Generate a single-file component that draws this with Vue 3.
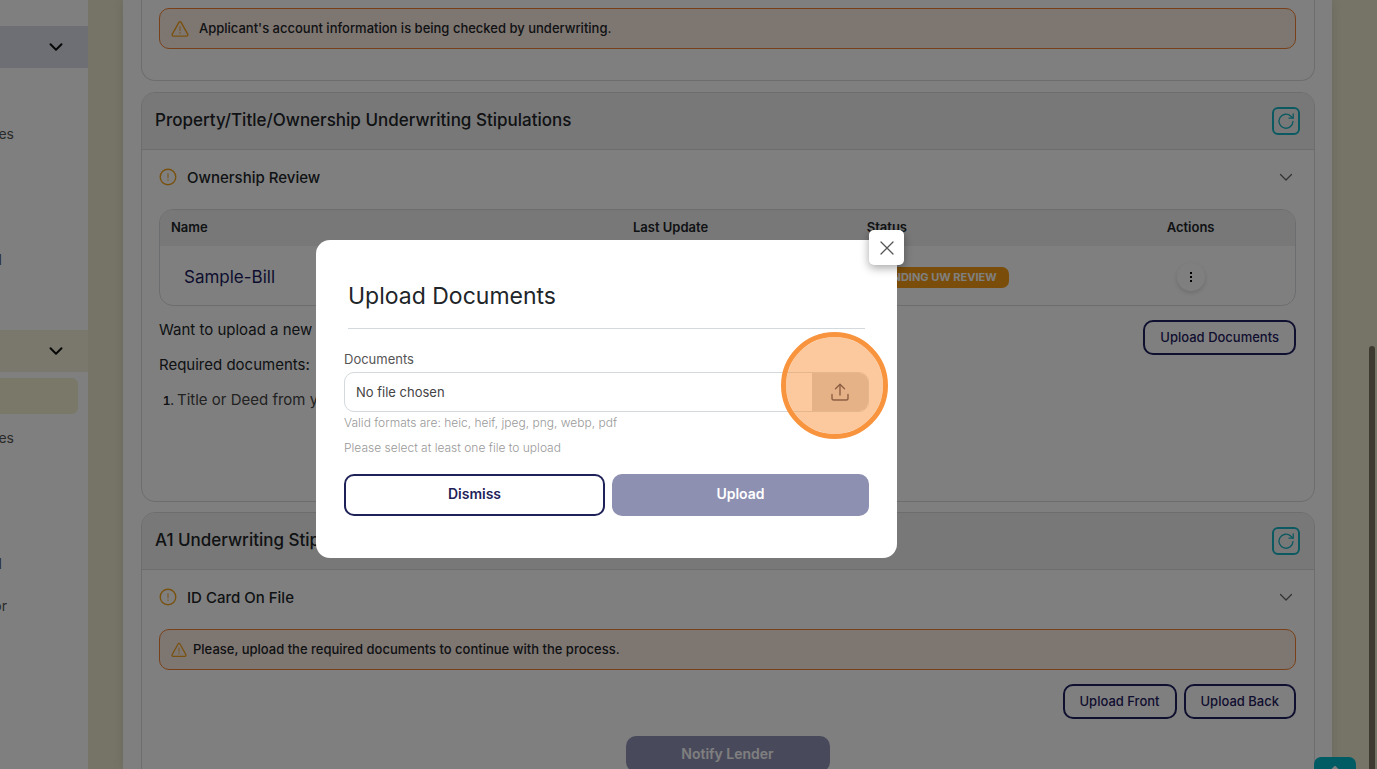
<script setup>
import { ref } from 'vue'

const upperItems = ref([
  { id: 1, label: '', end: '' },
  { id: 2, label: 'es', end: 'far' },
  { id: 3, label: '', end: '' },
  { id: 4, label: '', end: '' },
  { id: 5, label: 'l', end: 'edge' },
  { id: 6, label: '', end: '' }
])

const lowerItems = ref([
  { id: 7, label: '', end: '', active: true },
  { id: 8, label: 'es', end: 'far' },
  { id: 9, label: '', end: '' },
  { id: 10, label: '', end: '' },
  { id: 11, label: 'l', end: 'edge' },
  { id: 12, label: 'or', end: 'near' }
])

const documents = ref([
  { id: 1, name: 'Sample-Bill', lastUpdate: '', status: 'PENDING UW REVIEW' }
])

const fileName = ref('')
const modalOpen = ref(true)

function onFileChange(event) {
  fileName.value = event.target.files[0]?.name || ''
}
</script>

<template>
  <div class="page">
    <!-- Sidebar -->
    <nav class="sidebar">
      <button type="button" class="group group-blue" aria-label="Toggle group">
        <svg class="group-icon" viewBox="0 0 14 14"><path d="M1.500 4.200 7 9.800l5.500-5.600" /></svg>
      </button>
      <a v-for="item in upperItems" :key="item.id" href="#" class="nav-item" :class="item.end">{{ item.label }}</a>
      <button type="button" class="group group-cream" aria-label="Toggle group">
        <svg class="group-icon" viewBox="0 0 14 14"><path d="M1.500 4.200 7 9.800l5.500-5.600" /></svg>
      </button>
      <a
        v-for="item in lowerItems"
        :key="item.id"
        href="#"
        class="nav-item"
        :class="[item.end, { active: item.active }]"
      >{{ item.label }}</a>
    </nav>

    <!-- Main content -->
    <main class="content">
      <section class="card card-first">
        <div class="alert">
          <svg class="alert-icon large" viewBox="0 0 18 18">
            <path d="M7.900 2.300 1.300 14.200c-.5.9.1 1.900 1.100 1.900h13.200c1 0 1.600-1 1.100-1.900L10.100 2.300c-.5-.9-1.700-.9-2.200 0z" />
            <path class="mark" d="M9 6.800v3.700M9 12.600v.6" />
          </svg>
          <span>Applicant's account information is being checked by underwriting.</span>
        </div>
      </section>

      <section class="card">
        <header class="card-header">
          <h2>Property/Title/Ownership Underwriting Stipulations</h2>
          <button type="button" class="refresh" aria-label="Refresh">
            <svg viewBox="0 0 18 18"><path d="M16 9.500A7 7 0 1 1 13.900 4.200L16 6" /><path d="M16.200 2v4.200H12" /></svg>
          </button>
        </header>
        <div class="card-body tall">
          <div class="section-title">
            <svg class="warn" viewBox="0 0 18 18"><circle cx="9" cy="9" r="7.800" /><path class="mark" d="M9 5.700v4M9 11.900v.5" /></svg>
            <h3>Ownership Review</h3>
            <svg class="chevron" viewBox="0 0 14 14"><path d="M1.500 4.500 7 10l5.500-5.500" /></svg>
          </div>

          <div class="table-wrap">
            <table>
              <thead>
                <tr>
                  <th class="col-name">Name</th>
                  <th class="col-update">Last Update</th>
                  <th class="col-status">Status</th>
                  <th class="col-actions">Actions</th>
                </tr>
              </thead>
              <tbody>
                <tr v-for="doc in documents" :key="doc.id">
                  <td class="doc-name"><a href="#">{{ doc.name }}</a></td>
                  <td>{{ doc.lastUpdate }}</td>
                  <td><span class="badge">{{ doc.status }}</span></td>
                  <td class="doc-actions">
                    <button type="button" class="more" aria-label="More actions">
                      <svg viewBox="0 0 12 12"><rect x="5" y="1" width="2" height="2" /><rect x="5" y="5" width="2" height="2" /><rect x="5" y="9" width="2" height="2" /></svg>
                    </button>
                  </td>
                </tr>
              </tbody>
            </table>
          </div>

          <div class="upload-row">
            <div class="instructions">
              <p>Want to upload a new one?</p>
              <p>Required documents:</p>
              <ol>
                <li>Title or Deed from your</li>
              </ol>
            </div>
            <button type="button" class="btn-outline">Upload Documents</button>
          </div>
        </div>
      </section>

      <section class="card">
        <header class="card-header">
          <h2>A1 Underwriting Stipulations</h2>
          <button type="button" class="refresh" aria-label="Refresh">
            <svg viewBox="0 0 18 18"><path d="M16 9.500A7 7 0 1 1 13.900 4.200L16 6" /><path d="M16.200 2v4.200H12" /></svg>
          </button>
        </header>
        <div class="card-body">
          <div class="section-title">
            <svg class="warn" viewBox="0 0 18 18"><circle cx="9" cy="9" r="7.800" /><path class="mark" d="M9 5.700v4M9 11.900v.5" /></svg>
            <h3>ID Card On File</h3>
            <svg class="chevron" viewBox="0 0 14 14"><path d="M1.500 4.500 7 10l5.500-5.500" /></svg>
          </div>
          <div class="alert">
            <svg class="alert-icon" viewBox="0 0 18 18">
              <path d="M7.900 2.300 1.300 14.200c-.5.9.1 1.900 1.100 1.900h13.200c1 0 1.600-1 1.100-1.900L10.100 2.300c-.5-.9-1.700-.9-2.200 0z" />
              <path class="mark" d="M9 6.800v3.700M9 12.600v.6" />
            </svg>
            <span>Please, upload the required documents to continue with the process.</span>
          </div>
          <div class="button-row">
            <button type="button" class="btn-outline">Upload Front</button>
            <button type="button" class="btn-outline">Upload Back</button>
          </div>
          <button type="button" class="notify">Notify Lender</button>
        </div>
      </section>
    </main>

    <div class="scroll-thumb"></div>
    <button type="button" class="to-top" aria-label="Back to top">
      <svg viewBox="0 0 18 18"><path d="M9 16V2M3 8l6-6 6 6" /></svg>
    </button>
  </div>

  <!-- Upload modal -->
  <div v-if="modalOpen" class="overlay">
    <form class="modal" @submit.prevent>
      <button type="button" class="close" aria-label="Close" @click="modalOpen = false">
        <svg viewBox="0 0 14 14"><path d="M1 1l12 12M13 1 1 13" /></svg>
      </button>
      <h1>Upload Documents</h1>
      <label class="field-label" for="documents">Documents</label>
      <div class="file-field">
        <span class="file-name">{{ fileName || 'No file chosen' }}</span>
        <span class="file-button">
          <svg viewBox="0 0 18 18"><path d="M9 12V1.500M4.500 5.800 9 1.300l4.500 4.500M1 11.500v3.700c0 1 .8 1.800 1.800 1.800h12.400c1 0 1.800-.8 1.800-1.800v-3.700" /></svg>
        </span>
        <input id="documents" type="file" class="file-input" @change="onFileChange">
        <span class="highlight"></span>
      </div>
      <p class="hint">Valid formats are: heic, heif, jpeg, png, webp, pdf</p>
      <p class="hint hint-last">Please select at least one file to upload</p>
      <div class="modal-actions">
        <button type="button" class="dismiss" @click="modalOpen = false">Dismiss</button>
        <button type="submit" class="upload" :disabled="!fileName">Upload</button>
      </div>
    </form>
  </div>
</template>

<style>
body {
  margin: 0;
  font-family: Inter, "Open Sans", sans-serif;
  color: #212529;
}
</style>

<style scoped>
* {
  box-sizing: border-box;
}

h1, h2, h3, p, ol {
  margin: 0;
  padding: 0;
}

button {
  font-family: inherit;
  padding: 0;
  border: none;
}

a {
  text-decoration: none;
}

svg {
  display: block;
  fill: none;
  stroke: currentColor;
  stroke-linecap: round;
  stroke-linejoin: round;
}

.page {
  display: flex;
  height: 100vh;
  overflow: hidden;
  background: #ece8cd;
}

/* Sidebar */
.sidebar {
  display: flex;
  flex-direction: column;
  flex: 0 0 88px;
  padding-top: 26px;
  background: #fff;
  overflow: hidden;
}

.group {
  display: flex;
  flex-shrink: 0;
  align-items: center;
  justify-content: flex-end;
  height: 42px;
  padding-right: 25px;
  margin-bottom: 3px;
  color: #111;
}

.group-blue {
  background: #dbdee9;
}

.group-cream {
  margin-top: 7px;
  background: #f5f1d8;
}

.group-icon {
  width: 14px;
  height: 14px;
  stroke-width: 2;
}

.nav-item {
  display: flex;
  flex-shrink: 0;
  align-items: center;
  justify-content: flex-end;
  height: 42px;
  padding-bottom: 2px;
  font-size: 14px;
  color: #555;
}

.nav-item.far {
  padding-right: 74px;
}

.nav-item.near {
  padding-right: 81px;
}

.nav-item.edge {
  padding-right: 86px;
}

.nav-item.active {
  height: 36px;
  margin: 3px 10px 3px 0;
  border-radius: 0 6px 6px 0;
  background: #f5f1d0;
}

/* Cards */
.content {
  flex: 1;
  min-width: 0;
  margin: 0 45px 0 35px;
  padding: 0 17px 0 18px;
  background: #fff;
  box-shadow: 0 0 10px rgba(0, 0, 0, 0.1);
}

.card {
  margin-bottom: 10px;
  border: 1px solid #d8dade;
  border-radius: 14px;
  overflow: hidden;
}

.card-first {
  margin-bottom: 11px;
  padding: 8px 18px 31px 17px;
  border-top: none;
  border-radius: 0 0 14px 14px;
}

.card-header {
  display: flex;
  align-items: center;
  justify-content: space-between;
  height: 57px;
  padding: 0 14px 0 13px;
  background: #f0f0f0;
  border-bottom: 1px solid #d8dade;
}

.card-header h2 {
  padding-bottom: 3px;
  font-size: 17px;
  font-weight: 500;
}

.refresh {
  display: flex;
  align-items: center;
  justify-content: center;
  width: 28px;
  height: 28px;
  border: 2px solid #17b3c3;
  border-radius: 6px;
  background: transparent;
  color: #17b3c3;
}

.refresh svg {
  width: 18px;
  height: 18px;
  stroke-width: 1.3;
}

.card-body {
  padding: 0 18px 0 17px;
}

.card-body.tall {
  padding-bottom: 91px;
}

.section-title {
  display: flex;
  align-items: center;
  height: 54px;
  margin-bottom: 5px;
}

.section-title h3 {
  flex: 1;
  margin-left: 10px;
  font-size: 15px;
  font-weight: 500;
}

.warn {
  width: 18px;
  height: 18px;
  stroke: #f2a31f;
  stroke-width: 1.4;
}

.mark {
  opacity: 0.7;
}

.chevron {
  width: 14px;
  height: 14px;
  margin-right: 3px;
  stroke: #666;
  stroke-width: 1.3;
}

.alert {
  display: flex;
  align-items: center;
  gap: 6px;
  height: 41px;
  padding: 0 11px;
  border: 1px solid #f08030;
  border-radius: 10px;
  background: #fdece2;
  font-size: 13px;
  font-weight: 500;
}

.alert span {
  padding-bottom: 1px;
}

.alert-icon {
  width: 16px;
  height: 16px;
  stroke: #f2a31f;
  stroke-width: 1.4;
}

.alert-icon.large {
  width: 18px;
  height: 18px;
  margin-right: 4px;
}

.table-wrap {
  border: 1px solid #d8dade;
  border-radius: 14px;
  overflow: hidden;
}

table {
  width: 100%;
  table-layout: fixed;
  border-collapse: collapse;
}

th {
  height: 36px;
  padding: 0 11px 2px;
  background: #f0f0f0;
  text-align: left;
  font-size: 13px;
  font-weight: 600;
}

.col-name {
  width: 40.7%;
}

.col-update {
  width: 20.6%;
}

.col-status {
  width: 20.3%;
}

.col-actions {
  text-align: center;
}

td {
  height: 59px;
  padding: 2px 11px 0;
}

.doc-name {
  padding-left: 24px;
}

.doc-name a {
  font-size: 17px;
  color: #1b1b5e;
}

.badge {
  display: inline-block;
  padding: 0 12px;
  border-radius: 7px;
  background: #f59a14;
  color: #fff;
  font-size: 11px;
  font-weight: 700;
  line-height: 21px;
}

.more {
  display: flex;
  align-items: center;
  justify-content: center;
  width: 28px;
  height: 28px;
  margin: 0 auto;
  border-radius: 50%;
  background: #fff;
  box-shadow: 0 2px 5px rgba(0, 0, 0, 0.15);
}

.more svg {
  width: 12px;
  height: 12px;
  fill: #000;
  stroke: none;
}

.upload-row {
  display: flex;
  align-items: flex-start;
  justify-content: space-between;
  margin-top: 14px;
}

.instructions {
  display: flex;
  flex-direction: column;
  gap: 15px;
  font-size: 15px;
  line-height: 20px;
}

.instructions ol {
  padding-left: 18px;
  color: #444;
}

.instructions li::marker {
  font-size: 12px;
  font-weight: 600;
  color: #212529;
}

.btn-outline {
  height: 35px;
  padding: 0 15px 1px;
  border: 2px solid #1f2060;
  border-radius: 10px;
  background: #fff;
  color: #1f2060;
  font-size: 13px;
  font-weight: 500;
}

.button-row {
  display: flex;
  justify-content: flex-end;
  gap: 7px;
  margin-top: 14px;
}

.notify {
  display: block;
  width: 204px;
  height: 36px;
  margin: 17px auto 20px;
  padding-bottom: 2px;
  border-radius: 10px;
  background: #9193b6;
  color: #fff;
  font-size: 14px;
  font-weight: 600;
}

.scroll-thumb {
  position: fixed;
  right: 2px;
  top: 45%;
  bottom: 0;
  width: 6px;
  border-radius: 3px 3px 0 0;
  background: #7e7563;
}

.to-top {
  position: fixed;
  right: 21px;
  bottom: -30px;
  display: flex;
  justify-content: center;
  width: 42px;
  height: 42px;
  padding-top: 8px;
  border-radius: 7px;
  background: #00b8c8;
  color: #fff;
}

.to-top svg {
  width: 18px;
  height: 18px;
  stroke-width: 2;
}

/* Modal */
.overlay {
  position: fixed;
  inset: 0;
  display: flex;
  align-items: center;
  justify-content: center;
  padding: 29px 164px 0 0;
  background: rgba(0, 0, 0, 0.5);
}

.modal {
  position: relative;
  width: 581px;
  padding: 28px 28px 42px;
  border-radius: 14px;
  background: #fff;
}

.modal h1 {
  margin: 0 4px 22px;
  padding-bottom: 4px;
  border-bottom: 1px solid #d3d9dc;
  font-size: 23px;
  font-weight: 400;
  line-height: 56px;
}

.close {
  position: absolute;
  top: -10px;
  right: -7px;
  display: flex;
  align-items: center;
  justify-content: center;
  width: 35px;
  height: 35px;
  border-radius: 5px;
  background: #fff;
  color: #555;
  box-shadow: 0 3px 10px rgba(0, 0, 0, 0.35);
}

.close svg {
  width: 14px;
  height: 14px;
  stroke-width: 1.3;
}

.field-label {
  display: block;
  margin-bottom: 5px;
  color: #555;
  font-size: 13px;
  line-height: 16px;
}

.file-field {
  position: relative;
  display: flex;
  align-items: center;
  height: 40px;
  border: 1px solid #d3d9dc;
  border-radius: 10px;
}

.file-name {
  flex: 1;
  padding-left: 11px;
  color: #444;
  font-size: 13px;
}

.file-button {
  display: flex;
  align-items: center;
  justify-content: center;
  width: 56px;
  height: 100%;
  border-radius: 0 9px 9px 0;
  background: #d0d0d0;
  color: #222a4a;
}

.file-button svg {
  width: 18px;
  height: 18px;
  stroke-width: 1.4;
}

.file-input {
  position: absolute;
  inset: 0;
  width: 100%;
  height: 100%;
  opacity: 0;
}

/* Click marker over the upload button */
.highlight {
  position: absolute;
  top: -41px;
  right: -20px;
  width: 107px;
  height: 107px;
  border: 5px solid #f9943e;
  border-radius: 50%;
  background: rgba(249, 148, 62, 0.5);
  background-clip: padding-box;
  pointer-events: none;
}

.hint {
  margin-top: 3px;
  color: #999;
  font-size: 12px;
  font-weight: 300;
  line-height: 16px;
}

.hint-last {
  margin-top: 9px;
}

.modal-actions {
  display: flex;
  gap: 7px;
  margin-top: 18px;
}

.modal-actions button {
  flex: 1;
  height: 42px;
  padding-bottom: 3px;
  border-radius: 10px;
  font-size: 14px;
  font-weight: 600;
}

.modal-actions .dismiss {
  border: 2px solid #1f2258;
  background: #fff;
  color: #1f2258;
}

.modal-actions .upload {
  background: #8e90b2;
  color: #fff;
}
</style>
